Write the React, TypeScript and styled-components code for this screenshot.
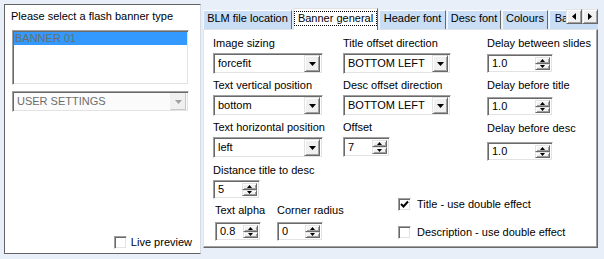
import React from 'react';
import styled, { createGlobalStyle, css } from 'styled-components';

const GlobalStyle = createGlobalStyle`
  html, body {
    margin: 0;
    padding: 0;
    background: #e9eff9;
  }
  body {
    font-family: "Liberation Sans", Arial, sans-serif;
    font-size: 11px;
    color: #000;
  }
  * {
    box-sizing: border-box;
  }
`;

const sunken = css`
  border: 1px solid;
  border-color: #a0a0a0 #ffffff #ffffff #a0a0a0;
  box-shadow: inset 1px 1px 0 #696969, inset -1px -1px 0 #e3e3e3;
`;

const raised = css`
  border: 1px solid;
  border-color: #e3e3e3 #696969 #696969 #e3e3e3;
  box-shadow: inset 1px 1px 0 #ffffff, inset -1px -1px 0 #a0a0a0;
  background: #f0f0f0;
`;

type Dir = 'up' | 'down' | 'left' | 'right';

const arrowShapes: Record<Dir, { w: number; h: number; points: string }> = {
  down: { w: 7, h: 4, points: '0,0 7,0 3.5,4' },
  up: { w: 5, h: 3, points: '0,3 5,3 2.5,0' },
  left: { w: 4, h: 7, points: '4,0 4,7 0,3.5' },
  right: { w: 4, h: 7, points: '0,0 0,7 4,3.5' },
};

const Arrow: React.FC<{ dir: Dir; small?: boolean; color?: string }> = ({ dir, small, color = '#000' }) => {
  const s = small && dir === 'down' ? { w: 5, h: 3, points: '0,0 5,0 2.5,3' } : arrowShapes[dir];
  return (
    <svg width={s.w} height={s.h} viewBox={`0 0 ${s.w} ${s.h}`}>
      <polygon points={s.points} fill={color} />
    </svg>
  );
};

const Window = styled.div`
  display: flex;
  align-items: flex-start;
  width: 604px;
  height: 259px;
  padding: 4px 0 0 4px;
  overflow: hidden;
`;

/* left side */

const SidePanel = styled.div`
  width: 197px;
  height: 250px;
  flex-shrink: 0;
  background: #fff;
  border: 1px solid #646464;
  border-right-color: #d5dbe4;
  display: flex;
  flex-direction: column;
  padding: 5px 0 4px 7px;
`;

const PromptLabel = styled.div`
  line-height: 13px;
  margin-left: -1px;
  white-space: nowrap;
`;

const ListBox = styled.div`
  ${sunken};
  margin-top: 7px;
  width: 177px;
  height: 55px;
  background: #fff;
  padding: 1px;
`;

const ListItem = styled.div<{ $selected?: boolean }>`
  height: 13px;
  line-height: 13px;
  padding-left: 1px;
  color: #6d6d6d;
  background: ${p => (p.$selected ? '#3399ff' : 'transparent')};
`;

const Combo = styled.div<{ $w: number; $top?: number; $disabled?: boolean }>`
  ${sunken};
  width: ${p => p.$w}px;
  height: 21px;
  margin-top: ${p => p.$top ?? 3}px;
  padding: 2px;
  display: flex;
  align-items: center;
  background: ${p => (p.$disabled ? '#fbfbfb' : '#fff')};
  color: ${p => (p.$disabled ? '#6d6d6d' : '#000')};
`;

const ComboText = styled.div`
  flex: 1;
  padding-left: 2px;
  line-height: 13px;
  white-space: nowrap;
  overflow: hidden;
`;

const DropButton = styled.div<{ $disabled?: boolean }>`
  ${raised};
  width: 16px;
  height: 17px;
  display: flex;
  align-items: center;
  justify-content: center;
  ${p =>
    p.$disabled &&
    css`
      border-color: #f0f0f0 #c8c8c8 #c8c8c8 #f0f0f0;
      box-shadow: none;
    `}
`;

const CheckRow = styled.div<{ $gap: number }>`
  display: flex;
  align-items: center;
  gap: ${p => p.$gap}px;
  height: 13px;
  line-height: 13px;
  white-space: nowrap;
`;

const LiveRow = styled(CheckRow)`
  margin-top: auto;
  align-self: flex-end;
  margin-right: 8px;
`;

const Box = styled.div`
  ${sunken};
  width: 13px;
  height: 13px;
  background: #fff;
  display: flex;
  align-items: center;
  justify-content: center;
  flex-shrink: 0;
`;

/* tab control */

const TabControl = styled.div`
  position: relative;
  margin: 4px 0 0 2px;
  width: 395px;
  height: 240px;
  flex-shrink: 0;
  display: flex;
  flex-direction: column;
  overflow: hidden;
`;

const TabStrip = styled.div`
  display: flex;
  align-items: flex-end;
  gap: 1px;
  height: 21px;
  flex-shrink: 0;
  position: relative;
  z-index: 1;
`;

const Tab = styled.div<{ $w: number; $active?: boolean }>`
  flex-shrink: 0;
  width: ${p => p.$w}px;
  height: 19px;
  padding-top: 1px;
  line-height: 13px;
  text-align: center;
  white-space: nowrap;
  overflow: hidden;
  background: #c9ddf5;
  border: 1px solid;
  border-bottom: none;
  border-color: #ffffff #696969 transparent #f4f8fd;
  ${p =>
    p.$active &&
    css`
      height: 22px;
      margin-bottom: -1px;
      padding-top: 2px;
      background: #fff;
      border-color: #e3e3e3 #696969 transparent #e3e3e3;
      display: flex;
      justify-content: center;
      position: relative;
      z-index: 2;
    `}
`;

const FocusBox = styled.div`
  height: 15px;
  padding: 0 3px;
  line-height: 13px;
  border: 1px dotted #000;
`;

const ScrollButtons = styled.div`
  position: absolute;
  top: 1px;
  right: 0;
  display: flex;
  z-index: 3;
`;

const ScrollButton = styled.div`
  ${raised};
  width: 16px;
  height: 15px;
  display: flex;
  align-items: center;
  justify-content: center;
`;

const TabPage = styled.div`
  flex: 1;
  background: #fff;
  border: 1px solid;
  border-color: #e3e3e3 #696969 #696969 #e3e3e3;
  box-shadow: inset -1px -1px 0 #a0a0a0;
  display: flex;
  padding: 7px 0 0 9px;
`;

const Column = styled.div<{ $w: number; $left?: number }>`
  width: ${p => p.$w}px;
  margin-left: ${p => p.$left ?? 0}px;
  display: flex;
  flex-direction: column;
  flex-shrink: 0;
`;

const RightArea = styled.div`
  margin-left: 20px;
  display: flex;
  flex-direction: column;
`;

const TopRow = styled.div`
  display: flex;
  align-items: flex-start;
`;

const Field = styled.div<{ $top?: number }>`
  display: flex;
  flex-direction: column;
  margin-top: ${p => p.$top ?? 0}px;
`;

const FieldLabel = styled.div`
  line-height: 13px;
  white-space: nowrap;
`;

const PairRow = styled.div`
  display: grid;
  grid-template-columns: 62px auto;
  margin-top: 5px;
  padding-left: 2px;
`;

const Spinner = styled.div<{ $w: number; $h?: number; $top?: number }>`
  ${sunken};
  width: ${p => p.$w}px;
  height: ${p => p.$h ?? 19}px;
  margin-top: ${p => p.$top ?? 3}px;
  padding: 2px;
  display: flex;
  background: #fff;
`;

const SpinText = styled.div`
  flex: 1;
  padding-left: 2px;
  display: flex;
  align-items: center;
  line-height: 13px;
`;

const SpinButtons = styled.div`
  width: 15px;
  display: flex;
  flex-direction: column;
`;

const SpinButton = styled.div`
  ${raised};
  flex: 1;
  display: flex;
  align-items: center;
  justify-content: center;
`;

const CheckGroup = styled.div`
  margin: 37px 0 0 55px;
  display: flex;
  flex-direction: column;
  gap: 15px;
`;

/* small building blocks */

const ComboBox: React.FC<{ value: string; w: number; top?: number; disabled?: boolean }> = ({
  value,
  w,
  top,
  disabled,
}) => (
  <Combo $w={w} $top={top} $disabled={disabled}>
    <ComboText>{value}</ComboText>
    <DropButton $disabled={disabled}>
      <Arrow dir="down" color={disabled ? '#a0a0a0' : '#000'} />
    </DropButton>
  </Combo>
);

const NumberBox: React.FC<{ value: string; w: number; h?: number; top?: number }> = ({ value, w, h, top }) => (
  <Spinner $w={w} $h={h} $top={top}>
    <SpinText>{value}</SpinText>
    <SpinButtons>
      <SpinButton>
        <Arrow dir="up" />
      </SpinButton>
      <SpinButton>
        <Arrow dir="down" small />
      </SpinButton>
    </SpinButtons>
  </Spinner>
);

const CheckBox: React.FC<{ label: string; checked?: boolean; gap: number }> = ({ label, checked, gap }) => (
  <CheckRow $gap={gap}>
    <Box>
      {checked && (
        <svg width="9" height="9" viewBox="0 0 9 9">
          <polyline points="1,4 3.5,6.5 8,1.5" fill="none" stroke="#000" strokeWidth="2" />
        </svg>
      )}
    </Box>
    <span>{label}</span>
  </CheckRow>
);

const tabs = [
  { label: 'BLM file location', w: 89 },
  { label: 'Banner general', w: 85, active: true },
  { label: 'Header font', w: 67 },
  { label: 'Desc font', w: 54 },
  { label: 'Colours', w: 46 },
  { label: 'Background', w: 70 },
];

const App: React.FC = () => (
  <>
    <GlobalStyle />
    <Window>
      <SidePanel>
        <PromptLabel>Please select a flash banner type</PromptLabel>
        <ListBox>
          <ListItem $selected>BANNER 01</ListItem>
        </ListBox>
        <ComboBox value="USER SETTINGS" w={177} top={6} disabled />
        <LiveRow $gap={4}>
          <Box />
          <span>Live preview</span>
        </LiveRow>
      </SidePanel>

      <TabControl>
        <TabStrip>
          {tabs.map(t => (
            <Tab key={t.label} $w={t.w} $active={t.active}>
              {t.active ? <FocusBox>{t.label}</FocusBox> : t.label}
            </Tab>
          ))}
        </TabStrip>
        <ScrollButtons>
          <ScrollButton>
            <Arrow dir="left" />
          </ScrollButton>
          <ScrollButton>
            <Arrow dir="right" />
          </ScrollButton>
        </ScrollButtons>

        <TabPage>
          <Column $w={110}>
            <Field>
              <FieldLabel>Image sizing</FieldLabel>
              <ComboBox value="forcefit" w={110} />
            </Field>
            <Field $top={5}>
              <FieldLabel>Text vertical position</FieldLabel>
              <ComboBox value="bottom" w={110} />
            </Field>
            <Field $top={5}>
              <FieldLabel>Text horizontal position</FieldLabel>
              <ComboBox value="left" w={110} />
            </Field>
            <Field $top={6}>
              <FieldLabel>Distance title to desc</FieldLabel>
              <NumberBox value="5" w={47} />
            </Field>
            <PairRow>
              <Field>
                <FieldLabel>Text alpha</FieldLabel>
                <NumberBox value="0.8" w={46} top={5} />
              </Field>
              <Field>
                <FieldLabel>Corner radius</FieldLabel>
                <NumberBox value="0" w={46} top={5} />
              </Field>
            </PairRow>
          </Column>

          <RightArea>
            <TopRow>
              <Column $w={108}>
                <Field>
                  <FieldLabel>Title offset direction</FieldLabel>
                  <ComboBox value="BOTTOM LEFT" w={108} />
                </Field>
                <Field $top={5}>
                  <FieldLabel>Desc offset direction</FieldLabel>
                  <ComboBox value="BOTTOM LEFT" w={108} />
                </Field>
                <Field $top={5}>
                  <FieldLabel>Offset</FieldLabel>
                  <NumberBox value="7" w={47} h={20} />
                </Field>
              </Column>
              <Column $w={90} $left={36}>
                <Field>
                  <FieldLabel>Delay between slides</FieldLabel>
                  <NumberBox value="1.0" w={66} top={4} />
                </Field>
                <Field $top={6}>
                  <FieldLabel>Delay before title</FieldLabel>
                  <NumberBox value="1.0" w={66} top={5} />
                </Field>
                <Field $top={6}>
                  <FieldLabel>Delay before desc</FieldLabel>
                  <NumberBox value="1.0" w={66} top={7} />
                </Field>
              </Column>
            </TopRow>
            <CheckGroup>
              <CheckBox label="Title - use double effect" checked gap={6} />
              <CheckBox label="Description - use double effect" gap={6} />
            </CheckGroup>
          </RightArea>
        </TabPage>
      </TabControl>
    </Window>
  </>
);

export default App;
